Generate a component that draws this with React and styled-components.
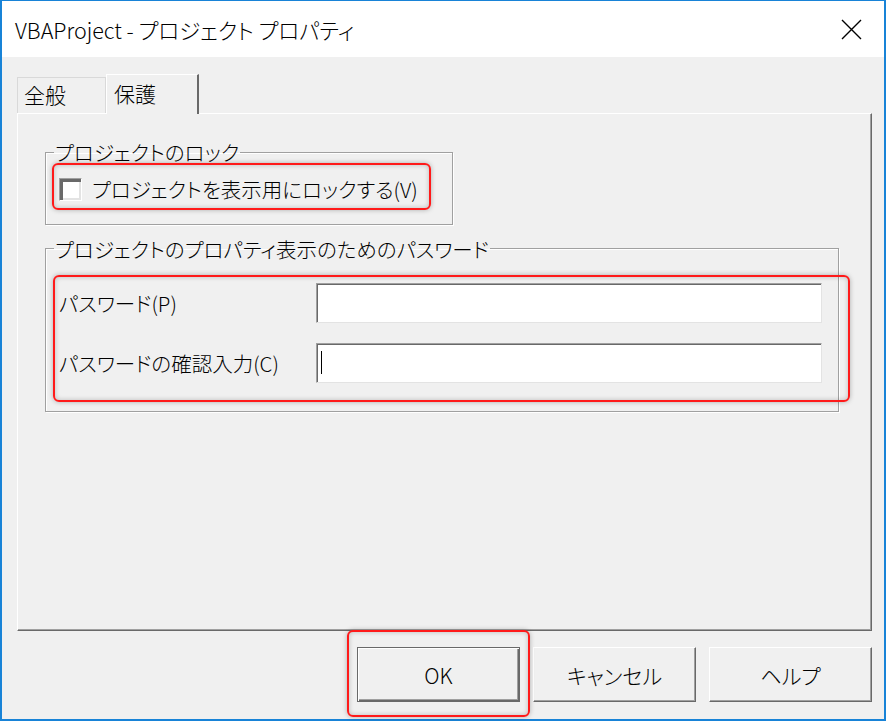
import React from "react";
import styled, { createGlobalStyle } from "styled-components";

const GlobalStyle = createGlobalStyle`
  html, body {
    margin: 0;
    padding: 0;
    background: #ffffff;
  }
  body {
    font-family: "Noto Sans CJK JP", "Noto Sans", sans-serif;
    font-feature-settings: "palt";
    font-weight: 300;
    color: #000;
  }
  * {
    box-sizing: border-box;
  }
`;

const Window = styled.div`
  width: 886px;
  height: 721px;
  display: flex;
  flex-direction: column;
  border: 2px solid #1883d7;
  border-top-width: 1px;
  background: #f0f0f0;
`;

const TitleBar = styled.div`
  height: 56px;
  flex: none;
  background: #ffffff;
  display: flex;
  align-items: center;
  justify-content: space-between;
  padding: 0 22px 0 13px;
`;

const Title = styled.div`
  font-size: 21.5px;
  line-height: 26px;
  padding-top: 2px;
`;

const CloseButton = styled.div`
  width: 22px;
  height: 22px;
  display: flex;
  align-items: center;
  justify-content: center;
`;

const Body = styled.div`
  flex: 1;
  display: flex;
  flex-direction: column;
  padding: 17px 12px 17px 15px;
`;

const TabBar = styled.div`
  height: 39px;
  flex: none;
  display: flex;
  align-items: flex-end;
  position: relative;
  z-index: 1;
`;

const Tab = styled.div`
  height: ${(p) => (p.active ? "40px" : "36px")};
  width: ${(p) => (p.active ? "93px" : "89px")};
  padding: ${(p) => (p.active ? "4px 0 0 7px" : "2px 0 0 6px")};
  font-size: 21px;
  line-height: 28px;
  background: #f0f0f0;
  border-style: solid;
  border-width: 1px 0 0 1px;
  border-color: ${(p) => (p.active ? "#ffffff" : "#d9d9d9")};
  border-right: ${(p) =>
    p.active ? "2px solid #696969" : "1px solid #d9d9d9"};
  margin-bottom: ${(p) => (p.active ? "-1px" : "0")};
`;

const Panel = styled.div`
  flex: 1;
  border: 1px solid;
  border-color: #ffffff #696969 #696969 #ffffff;
  box-shadow: inset -1px -1px 0 #a0a0a0;
  padding: 26px 0 0 27px;
`;

const Group = styled.fieldset`
  margin: ${(p) => p.$gap || 0}px 0 0 0;
  width: ${(p) => p.$width}px;
  border: 1px solid #a0a0a0;
  box-shadow: inset 1px 1px 0 #ffffff, 1px 1px 0 #ffffff;
  padding: ${(p) => p.$pad};
  min-width: 0;
`;

const Legend = styled.legend`
  font-size: 20.5px;
  line-height: 24px;
  padding: 0 1px;
  margin-left: -5px;
`;

const Marked = styled.div`
  position: relative;
  display: ${(p) => (p.$inline ? "inline-flex" : "block")};

  &::after {
    content: "";
    position: absolute;
    top: ${(p) => p.$inset[0]}px;
    right: ${(p) => p.$inset[1]}px;
    bottom: ${(p) => p.$inset[2]}px;
    left: ${(p) => p.$inset[3]}px;
    border: 2px solid #ff1a1a;
    border-radius: 6px;
    box-shadow: 0 0 5px rgba(0, 0, 0, 0.28),
      inset 0 0 5px rgba(0, 0, 0, 0.22);
    pointer-events: none;
  }
`;

const CheckRow = styled.label`
  display: inline-flex;
  align-items: center;
  gap: 10px;
  font-size: 20.5px;
  line-height: 28px;
`;

const CheckBox = styled.span`
  width: 23px;
  height: 23px;
  background: #ffffff;
  border-style: solid;
  border-width: 1px;
  border-color: #a0a0a0 #ffffff #ffffff #a0a0a0;
  box-shadow: inset 3px 3px 0 #696969, inset -2px -2px 0 #e3e3e3;
`;

const FieldGrid = styled.div`
  display: grid;
  grid-template-columns: 257px 506px;
  grid-auto-rows: 40px;
  row-gap: 20px;
  align-items: center;
`;

const FieldLabel = styled.div`
  font-size: 20.5px;
  line-height: 28px;
`;

const TextBox = styled.div`
  height: 40px;
  background: #ffffff;
  border-style: solid;
  border-width: 1px;
  border-color: #a0a0a0 #e3e3e3 #e3e3e3 #a0a0a0;
  box-shadow: inset 1px 1px 0 #696969;
  display: flex;
  align-items: center;
  padding-left: 4px;
`;

const Caret = styled.span`
  width: 1px;
  height: 23px;
  background: #000;
`;

const ButtonRow = styled.div`
  flex: none;
  margin-top: 16px;
  display: flex;
  justify-content: flex-end;
  gap: 13px;
`;

const Button = styled.div`
  width: 163px;
  height: 55px;
  display: flex;
  align-items: center;
  justify-content: center;
  font-size: 21px;
  line-height: 28px;
  background: #f0f0f0;
  border: 1px solid;
  border-color: ${(p) =>
    p.$default ? "#696969" : "#ffffff #696969 #696969 #ffffff"};
  box-shadow: ${(p) =>
    p.$default
      ? "inset 1px 1px 0 #ffffff, inset -1px -1px 0 #696969, inset -2px -2px 0 #a0a0a0"
      : "inset -1px -1px 0 #a0a0a0"};
`;

const CloseIcon = () => (
  <svg width="21" height="21" viewBox="0 0 21 21">
    <path d="M1 1 L20 20 M20 1 L1 20" stroke="#000" strokeWidth="1.4" fill="none" />
  </svg>
);

export default function App() {
  return (
    <>
      <GlobalStyle />
      <Window>
        <TitleBar>
          <Title>VBAProject - プロジェクト プロパティ</Title>
          <CloseButton>
            <CloseIcon />
          </CloseButton>
        </TitleBar>
        <Body>
          <TabBar>
            <Tab>全般</Tab>
            <Tab active>保護</Tab>
          </TabBar>
          <Panel>
            <Group $width={408} $pad="11px 12px 18px 13px">
              <Legend>プロジェクトのロック</Legend>
              <Marked $inline $inset={[-12, -13, -7, -7]}>
                <CheckRow>
                  <CheckBox />
                  プロジェクトを表示用にロックする(V)
                </CheckRow>
              </Marked>
            </Group>
            <Group $width={794} $gap={12} $pad="22px 12px 28px 13px">
              <Legend>プロジェクトのプロパティ表示のためのパスワード</Legend>
              <Marked $inset={[-8, -24, -19, -6]}>
                <FieldGrid>
                  <FieldLabel>パスワード(P)</FieldLabel>
                  <TextBox />
                  <FieldLabel>パスワードの確認入力(C)</FieldLabel>
                  <TextBox>
                    <Caret />
                  </TextBox>
                </FieldGrid>
              </Marked>
            </Group>
          </Panel>
          <ButtonRow>
            <Marked $inset={[-17, -10, -15, -10]}>
              <Button $default>OK</Button>
            </Marked>
            <Button>キャンセル</Button>
            <Button>ヘルプ</Button>
          </ButtonRow>
        </Body>
      </Window>
    </>
  );
}
